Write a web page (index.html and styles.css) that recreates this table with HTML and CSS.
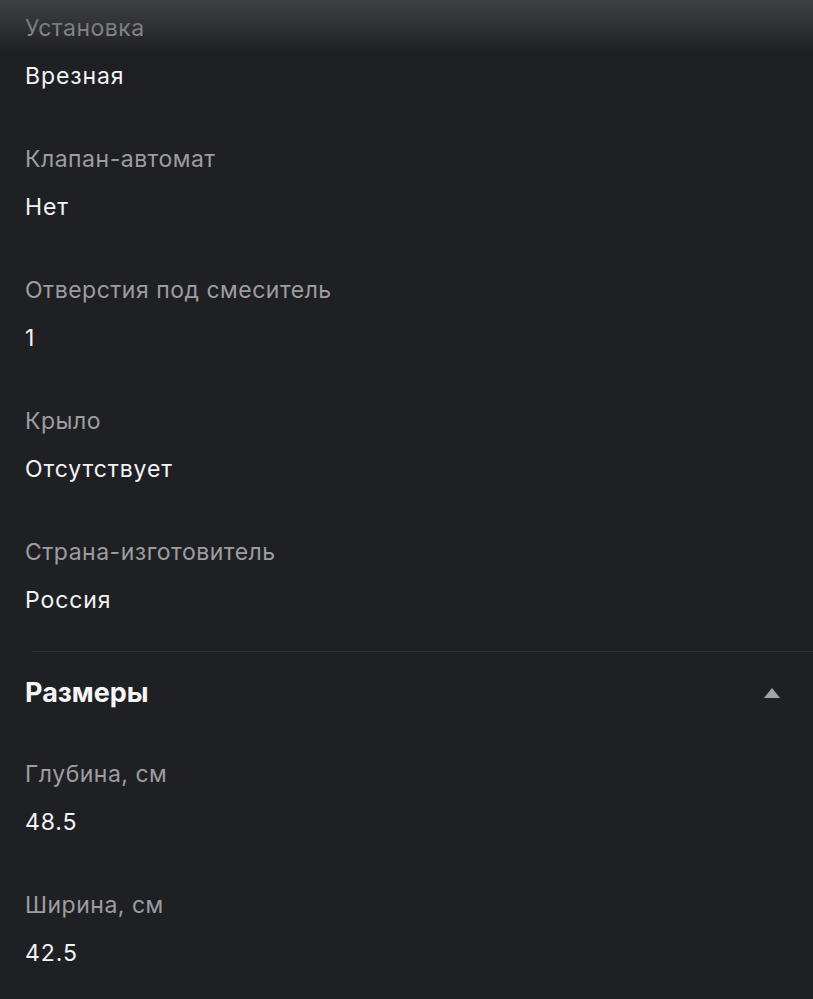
FILE: index.html
```html
<!DOCTYPE html>
<html lang="ru">
<head>
<meta charset="utf-8">
<title>Характеристики</title>
<link rel="stylesheet" href="styles.css">
</head>
<body>
<div class="shade"></div>
<main class="page">
  <section class="specs">
    <div class="spec"><div class="label">Установка</div><div class="value">Врезная</div></div>
    <div class="spec"><div class="label">Клапан-автомат</div><div class="value">Нет</div></div>
    <div class="spec"><div class="label">Отверстия под смеситель</div><div class="value">1</div></div>
    <div class="spec"><div class="label">Крыло</div><div class="value">Отсутствует</div></div>
    <div class="spec"><div class="label">Страна-изготовитель</div><div class="value">Россия</div></div>
  </section>
  <hr class="divider">
  <section class="group">
    <div class="group-head">
      <h2 class="group-title">Размеры</h2>
      <span class="caret"></span>
    </div>
    <div class="specs">
      <div class="spec"><div class="label">Глубина, см</div><div class="value">48.5</div></div>
      <div class="spec"><div class="label">Ширина, см</div><div class="value">42.5</div></div>
    </div>
  </section>
</main>
</body>
</html>
```

FILE: styles.css
```css
html, body {
  margin: 0;
  padding: 0;
  background: #1f2024;
  height: 100%;
  overflow: hidden;
}
body {
  font-family: Inter, "Noto Sans", sans-serif;
  color: #f2f2f2;
}
.shade {
  position: fixed;
  left: 0;
  right: 0;
  top: 0;
  height: 52px;
  background: linear-gradient(to bottom, rgba(72,73,78,0.8), rgba(31,32,36,0));
  pointer-events: none;
}
.page {
  padding: 12px 33px 0 25px;
}
.specs {
  display: flex;
  flex-direction: column;
  gap: 51px;
}
.spec {
  display: flex;
  flex-direction: column;
  gap: 16px;
}
.label {
  font-size: 23px;
  line-height: 32px;
  color: #9d9da1;
  letter-spacing: 0.5px;
}
.value {
  font-size: 23px;
  line-height: 32px;
  color: #f4f4f4;
  letter-spacing: 0.9px;
}
.divider {
  border: 0;
  height: 1px;
  background: #303136;
  margin: 35px -33px 0 7px;
}
.group-head {
  display: flex;
  align-items: center;
  justify-content: space-between;
  height: 40px;
  margin: 21px 0 45px;
}
.group-title {
  margin: 0;
  font-size: 27px;
  font-weight: 700;
  line-height: 40px;
  color: #f6f6f6;
}
.caret {
  width: 0;
  height: 0;
  border-left: 8px solid transparent;
  border-right: 8px solid transparent;
  border-bottom: 10px solid #a3a3a7;
}
```
